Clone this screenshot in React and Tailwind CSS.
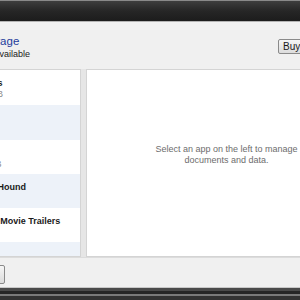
import React from 'react';

const apps = [
  { name: 'iPhotos', size: '12.6 MB', h: 'h-[35px]', bg: 'bg-white' },
  { name: '', size: '', h: 'h-[35px]', bg: 'bg-[#edf2f9]' },
  { name: '', size: '12.5 KB', h: 'h-[34px]', bg: 'bg-white' },
  { name: 'SoundHound', size: '', h: 'h-[34px]', bg: 'bg-[#edf2f9]' },
  { name: 'iTunes Movie Trailers', size: '', h: 'h-[34px]', bg: 'bg-white' },
  { name: '', size: '', h: 'h-[20px]', bg: 'bg-[#edf2f9]' },
];

const App = () => {
  return (
    <div className="w-[300px] h-[300px] overflow-hidden flex flex-col bg-[#f0f0f0] font-['Liberation_Sans',Arial,sans-serif]">
      <div className="h-[22px] shrink-0 border-t border-[#8a8a8a] border-b border-b-[#b4b4b4] bg-gradient-to-b from-[#3e3e3e] via-[#262626] to-[#1c1c1c]" />

      <div className="h-[47px] shrink-0 flex justify-between items-start">
        <div className="pt-[12px] whitespace-nowrap">
          <div className="-ml-[21px] text-[11.5px] leading-[14px] text-[#1e3b9c]">Storage</div>
          <div className="-ml-[36px] mt-[1px] text-[9px] leading-[11px] text-[#1a1a1a]">4.9 GB available</div>
        </div>
        <button className="mt-[17px] -mr-[20px] w-[42px] h-[15px] border border-[#8a8a8a] rounded-[2px] bg-gradient-to-b from-[#f6f6f6] to-[#dcdcdc] text-[10px] leading-[13px] text-left pl-[4px] text-[#1a1a1a]">
          Buy
        </button>
      </div>

      <div className="h-[188px] shrink-0 flex">
        <div className="w-[81px] shrink-0 border-t border-b border-r border-[#d4d4d4] bg-white overflow-hidden">
          {apps.map((a, i) => (
            <div key={i} className={`${a.h} ${a.bg} -ml-[30.5px] pt-[7px] whitespace-nowrap`}>
              <div className="text-[9px] leading-[12px] font-bold text-[#1a1a1a] h-[12px]">{a.name}</div>
              <div className="text-[9px] leading-[11px] text-[#8a8a8a]">{a.size}</div>
            </div>
          ))}
        </div>
        <div className="w-[5px] shrink-0 bg-[#e6e6e6]" />
        <div className="flex-1 -mr-[66px] border-t border-b border-l border-[#d4d4d4] bg-white flex justify-center pt-[74px]">
          <p className="text-[9px] leading-[11px] text-[#6d6d6d] text-center">
            Select an app on the left to manage<br />documents and data.
          </p>
        </div>
      </div>

      <div className="h-[31px] shrink-0 border-t border-[#dcdcdc] border-b border-b-[#c8c8c8] flex items-start">
        <button className="mt-[7px] -ml-[40px] w-[45px] h-[19px] border border-[#8a8a8a] rounded-[2px] bg-gradient-to-b from-[#f6f6f6] to-[#dcdcdc] text-[10px]">
          Done
        </button>
      </div>

      <div className="flex-1 flex flex-col">
        <div className="h-[3px] bg-[#4a4a4a]" />
        <div className="h-[3px] bg-[#262626]" />
        <div className="h-[2px] bg-[#7a7a7a]" />
        <div className="flex-1 bg-[#333333]" />
      </div>
    </div>
  );
};

export default App;
